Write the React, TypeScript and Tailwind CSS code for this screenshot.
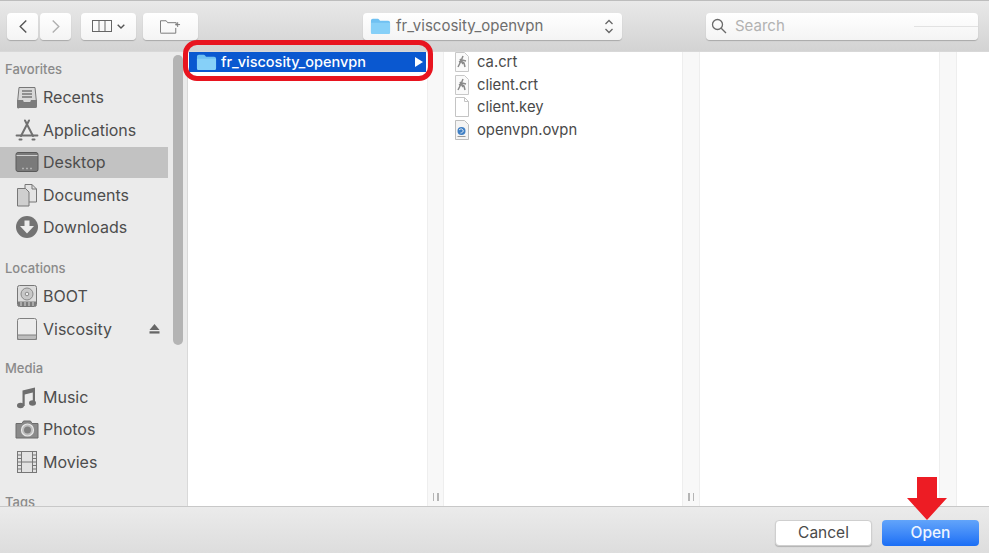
import React from 'react';

const FONT = "font-['Inter','Noto_Sans',sans-serif]";

const FolderIcon = ({ className }: { className: string }) => (
  <svg viewBox="0 0 22 18" className={className}>
    <path d="M1 3.500C1 2.400 1.800 1.500 3 1.500h5c.8 0 1.200.3 1.700.9l.8 1.100H19c1.200 0 2 .8 2 2v10c0 1.100-.8 2-2 2H3c-1.200 0-2-.9-2-2z" fill="#6fc1f2" />
    <path d="M1 5.500h20v10c0 1.100-.8 2-2 2H3c-1.200 0-2-.9-2-2z" fill="#86d0f8" />
  </svg>
);

// sidebar icons, all drawn on a 24x24 box
const Recents = () => (
  <svg viewBox="0 0 24 24" className="w-[24px] h-[24px]">
    <path d="M4 2.500h16l1.500 15H2.500z" fill="#d8d8d8" stroke="#777" strokeWidth="1" />
    <path d="M7 6h10M7 9h10M7 12h10" stroke="#777" strokeWidth="1.400" />
    <path d="M2 15h6l1 2.500h6l1-2.500h6v6.500a1.500 1.500 0 0 1-1.500 1.500h-16A1.500 1.500 0 0 1 2 21.500z" fill="#7c7c7c" />
  </svg>
);
const Applications = () => (
  <svg viewBox="0 0 24 24" className="w-[24px] h-[24px]" fill="none" stroke="#707070">
    <path d="M10 2.500l8 15.500M14 2.500L6 18" strokeWidth="2" strokeLinecap="round" />
    <path d="M1.500 17.500h21" strokeWidth="1.800" strokeLinecap="round" />
    <path d="M4.500 21.500h2M17.500 21.500h2" strokeWidth="2" strokeLinecap="round" />
  </svg>
);
const Desktop = () => (
  <svg viewBox="0 0 24 24" className="w-[24px] h-[24px]">
    <rect x="1" y="2.500" width="22" height="19" rx="2" fill="#7a7a7a" stroke="#5a5a5a" />
    <path d="M1.500 5.500h21" stroke="#d0d0d0" strokeWidth="1" />
    <path d="M7.500 18.500h1M11.500 18.500h1M15.500 18.500h1" stroke="#e6e6e6" strokeWidth="1.500" />
  </svg>
);
const Documents = () => (
  <svg viewBox="0 0 24 24" className="w-[24px] h-[24px]">
    <path d="M10 1.500h7l4.500 4.500v13H10z" fill="#e4e4e4" stroke="#777" />
    <path d="M2.500 5.500h8l3.500 3.500v14H2.500z" fill="#cfcfcf" stroke="#777" />
    <path d="M17 1.500V6h4.500" fill="none" stroke="#777" />
  </svg>
);
const Downloads = () => (
  <svg viewBox="0 0 24 24" className="w-[24px] h-[24px]">
    <circle cx="12" cy="12" r="11" fill="#737373" />
    <path d="M9.500 5.500h5V11H19l-7 7.500L5 11h4.500z" fill="#ececec" />
  </svg>
);
const Boot = () => (
  <svg viewBox="0 0 24 24" className="w-[24px] h-[24px]">
    <rect x="2.500" y="1.500" width="19" height="21" rx="2" fill="#dcdcdc" stroke="#777" />
    <circle cx="12" cy="10" r="6" fill="#c8c8c8" stroke="#8a8a8a" />
    <circle cx="12" cy="10" r="1.800" fill="#eee" stroke="#8a8a8a" />
    <rect x="3" y="17.500" width="18" height="4.500" fill="#7c7c7c" />
    <path d="M6 18v4M10 18v4M14 18v4M18 18v4" stroke="#d8d8d8" />
  </svg>
);
const Drive = () => (
  <svg viewBox="0 0 24 24" className="w-[24px] h-[24px]">
    <path d="M4.500 1.500h15a2 2 0 0 1 2 2v19h-19v-19a2 2 0 0 1 2-2z" fill="#ececec" stroke="#808080" />
    <path d="M2.500 18h19v3a1.500 1.500 0 0 1-1.500 1.500H4A1.500 1.500 0 0 1 2.500 21z" fill="#bdbdbd" stroke="#808080" />
  </svg>
);
const Music = () => (
  <svg viewBox="0 0 24 24" className="w-[24px] h-[24px]">
    <path d="M7.500 5.500L20 2.500v15.500h-2.200V7.500L9.700 9.500V21H7.500z" fill="#6e6e6e" />
    <ellipse cx="5.500" cy="20.500" rx="3.500" ry="2.800" fill="#6e6e6e" />
    <ellipse cx="17.500" cy="18" rx="3.500" ry="2.800" fill="#6e6e6e" />
  </svg>
);
const Photos = () => (
  <svg viewBox="0 0 24 24" className="w-[24px] h-[24px]">
    <path d="M1 6.500h6l1.500-2.500h7L17 6.500h6V21H1z" fill="#8a8a8a" stroke="#6c6c6c" />
    <circle cx="12.500" cy="13" r="6" fill="#bdbdbd" stroke="#e8e8e8" strokeWidth="1.200" />
    <circle cx="12.500" cy="13" r="3.500" fill="#808080" />
  </svg>
);
const Movies = () => (
  <svg viewBox="0 0 24 24" className="w-[24px] h-[24px]">
    <rect x="2.500" y="1.500" width="19" height="21" fill="#e2e2e2" stroke="#777" />
    <path d="M6.500 1.500v21M17.500 1.500v21M6.500 12h11" stroke="#777" />
    <path d="M2.500 5h4M2.500 8.500h4M2.500 12h4M2.500 15.500h4M2.500 19h4M17.500 5h4M17.500 8.500h4M17.500 12h4M17.500 15.500h4M17.500 19h4" stroke="#777" />
  </svg>
);

const CertIcon = () => (
  <svg viewBox="0 0 16 20" className="w-[16px] h-[20px]">
    <path d="M1.500 .5h9l4 4v15h-13z" fill="#fafafa" stroke="#c8c8c8" />
    <path d="M9 4L7 9 4 15M7 9l3 2 1 4M7 9l-2 1M8 8l4 1M6 7l3 5" fill="none" stroke="#8a8a8a" strokeWidth="1.500" />
  </svg>
);
const BlankIcon = () => (
  <svg viewBox="0 0 16 20" className="w-[16px] h-[20px]">
    <path d="M1.500 .5h9l4 4v15h-13z" fill="#fff" stroke="#c4c4c4" />
    <path d="M10.500 .5v4h4" fill="none" stroke="#c4c4c4" />
  </svg>
);
const OvpnIcon = () => (
  <svg viewBox="0 0 16 20" className="w-[16px] h-[20px]">
    <path d="M1.500 .5h9l4 4v15h-13z" fill="#f4f4f4" stroke="#bdbdbd" />
    <circle cx="7.500" cy="11" r="4" fill="#3f7fc4" />
    <path d="M5 10c1.500-1.500 3-1.500 4 0s-1 3-2.500 3" fill="none" stroke="#dfe9f3" />
    <path d="M3.500 16.500h8" stroke="#999" />
  </svg>
);

const SectionHead = ({ label }: { label: string }) => (
  <div className="h-[29px] pl-[5px] flex items-end pb-[2px] text-[13px] font-medium text-[#8a8a8a]">{label}</div>
);

const SidebarRow = ({ icon, label, active, eject }: { icon: React.ReactNode; label: string; active?: boolean; eject?: boolean }) => (
  <div className={`h-[32.5px] flex items-center pl-[15px] pr-[8px] text-[16px] text-[#4d4d4d] ${active ? 'bg-[#c2c2c2] border-y border-[#ebebeb]' : ''}`}>
    {icon}
    <span className="ml-[4px] flex-1">{label}</span>
    {eject && (
      <svg viewBox="0 0 12 11" className="w-[11px] h-[10px]">
        <path d="M6 0l5.500 6.500H.5z" fill="#666" />
        <rect x=".5" y="8" width="11" height="2.500" fill="#666" />
      </svg>
    )}
  </div>
);

const FileRow = ({ icon, name }: { icon: React.ReactNode; name: string }) => (
  <div className="h-[22.6px] flex items-center pl-[10px] text-[14.800px] text-[#4a4a4a]">
    {icon}
    <span className="ml-[7px]">{name}</span>
  </div>
);

const ColumnDivider = ({ className, grip = true }: { className: string; grip?: boolean }) => (
  <div className={`shrink-0 bg-[#f8f8f8] border-x border-[#eeeeee] flex items-end justify-center gap-[3px] pb-[5px] ${className}`}>
    {grip && <div className="w-[1.500px] h-[8px] bg-[#b5b5b5]" />}
    {grip && <div className="w-[1.500px] h-[8px] bg-[#b5b5b5]" />}
  </div>
);

const ToolButton = ({ className, children }: { className: string; children: React.ReactNode }) => (
  <div className={`h-[27px] rounded-[4px] bg-gradient-to-b from-[#ffffff] to-[#f4f4f4] shadow-[0_1px_1px_rgba(0,0,0,0.22)] flex items-center justify-center ${className}`}>
    {children}
  </div>
);

export default function App() {
  return (
    <div className={`relative w-[989px] h-[553px] overflow-hidden flex flex-col bg-white ${FONT}`}>
      {/* toolbar */}
      <div className="h-[52px] shrink-0 flex items-center pl-[7px] bg-gradient-to-b from-[#e9e9e9] to-[#d3d3d3] border-t border-t-[#bdbdbd] border-b border-b-[#d8d8d8]">
        <ToolButton className="w-[31px]">
          <svg viewBox="0 0 10 16" className="w-[10px] h-[15px]" fill="none" stroke="#555" strokeWidth="1.500"><path d="M8.500 1.500L2 8l6.500 6.500" /></svg>
        </ToolButton>
        <ToolButton className="w-[31px] ml-[2px]">
          <svg viewBox="0 0 10 16" className="w-[10px] h-[15px]" fill="none" stroke="#b0b0b0" strokeWidth="1.500"><path d="M1.500 1.500L8 8l-6.500 6.500" /></svg>
        </ToolButton>
        <ToolButton className="w-[55px] ml-[10px] gap-[5px]">
          <svg viewBox="0 0 20 12" className="w-[20px] h-[12px]" fill="none" stroke="#666"><rect x=".5" y=".5" width="19" height="11" /><path d="M7 .5v11M13 .5v11" /></svg>
          <svg viewBox="0 0 8 5" className="w-[8px] h-[5px]" fill="none" stroke="#555" strokeWidth="1.400"><path d="M.7 .7L4 4l3.300-3.300" /></svg>
        </ToolButton>
        <ToolButton className="w-[55px] ml-[7px]">
          <svg viewBox="0 0 22 15" className="w-[21px] h-[15px]" fill="none" stroke="#777"><path d="M.5 14V1.500h6l1.500 2h9v3M.5 14.500h16V9" /><path d="M18.500 3v5M16 5.500h5" /></svg>
        </ToolButton>
        <ToolButton className="w-[259px] ml-[165px] pl-[7px] pr-[8px] justify-start">
          <FolderIcon className="w-[21px] h-[18px]" />
          <span className="ml-[5px] flex-1 text-[15px] text-[#6e6e6e]">fr_viscosity_openvpn</span>
          <svg viewBox="0 0 10 15" className="w-[10px] h-[15px]" fill="none" stroke="#666" strokeWidth="1.300"><path d="M1.500 5L5 1.500 8.500 5M1.500 10L5 13.500 8.500 10" /></svg>
        </ToolButton>
        <ToolButton className="relative w-[272px] ml-[84px] pl-[5px] justify-start">
          <svg viewBox="0 0 16 16" className="w-[16px] h-[16px]" fill="none" stroke="#6a6a6a" strokeWidth="1.300"><circle cx="6.500" cy="6.500" r="5" /><path d="M10.200 10.200L15 15" /></svg>
          <span className="ml-[8px] text-[15px] text-[#b2b2b2]">Search</span>
          <div className="absolute right-0 top-[13px] w-[64px] h-px bg-[#e2e2e2]" />
        </ToolButton>
      </div>

      {/* browser body */}
      <div className="flex-1 min-h-0 flex">
        <div className="relative w-[188px] shrink-0 bg-[#ebebeb] border-r border-[#d9d9d9] overflow-hidden">
          <div className="w-[168px]">
            <SectionHead label="Favorites" />
            <SidebarRow icon={<Recents />} label="Recents" />
            <SidebarRow icon={<Applications />} label="Applications" />
            <SidebarRow icon={<Desktop />} label="Desktop" active />
            <SidebarRow icon={<Documents />} label="Documents" />
            <SidebarRow icon={<Downloads />} label="Downloads" />
            <div className="h-[7.500px]" />
            <SectionHead label="Locations" />
            <SidebarRow icon={<Boot />} label="BOOT" />
            <SidebarRow icon={<Drive />} label="Viscosity" eject />
            <div className="h-[6.500px]" />
            <SectionHead label="Media" />
            <SidebarRow icon={<Music />} label="Music" />
            <SidebarRow icon={<Photos />} label="Photos" />
            <SidebarRow icon={<Movies />} label="Movies" />
            <div className="h-[7.500px]" />
            <SectionHead label="Tags" />
          </div>
          {/* sidebar scroller */}
          <div className="absolute left-[173px] top-[3px] w-[10px] h-[290px] rounded-full bg-[#b4b4b4]" />
        </div>

        <div className="w-[239px] shrink-0">
          <div className="mx-[1px] h-[20px] flex items-center pl-[7px] pr-[3px] bg-[#0a58d0] text-[14.500px] font-medium text-white">
            <FolderIcon className="w-[21px] h-[18px]" />
            <span className="ml-[4px] flex-1">fr_viscosity_openvpn</span>
            <svg viewBox="0 0 8 10" className="w-[8px] h-[10px]"><path d="M0 0l8 5-8 5z" fill="#fff" /></svg>
          </div>
        </div>
        <ColumnDivider className="w-[17px]" />
        <div className="w-[238px] shrink-0 -mt-px">
          <FileRow icon={<CertIcon />} name="ca.crt" />
          <FileRow icon={<CertIcon />} name="client.crt" />
          <FileRow icon={<BlankIcon />} name="client.key" />
          <FileRow icon={<OvpnIcon />} name="openvpn.ovpn" />
        </div>
        <ColumnDivider className="w-[18px]" />
        <div className="w-[239px] shrink-0" />
        <ColumnDivider className="w-[18px]" grip={false} />
        <div className="flex-1" />
      </div>

      {/* footer */}
      <div className="h-[47px] shrink-0 flex items-center justify-end gap-[10px] pr-[10px] pt-[6px] bg-gradient-to-b from-[#ebebeb] to-[#dddddd] border-t border-[#c8c8c8]">
        <div className="w-[97px] h-[26px] rounded-[4px] bg-white border border-[#cfcfcf] shadow-[0_1px_1px_rgba(0,0,0,0.2)] flex items-center justify-center text-[15.500px] text-[#4a4a4a]">Cancel</div>
        <div className="w-[97px] h-[26px] rounded-[4px] bg-gradient-to-b from-[#62a4fa] to-[#1a6ef5] flex items-center justify-center text-[15.500px] font-medium text-[#eef5ff]">Open</div>
      </div>

      {/* red annotations */}
      <div className="absolute left-[183px] top-[40px] w-[250px] h-[41px] rounded-[14px] border-[5px] border-[#e8141f]" />
      <svg viewBox="0 0 40 43" className="absolute left-[907px] top-[477px] w-[40px] h-[43px]">
        <path d="M10 0h20v21h10L20 43 0 21h10z" fill="#ed1c24" />
      </svg>
    </div>
  );
}
